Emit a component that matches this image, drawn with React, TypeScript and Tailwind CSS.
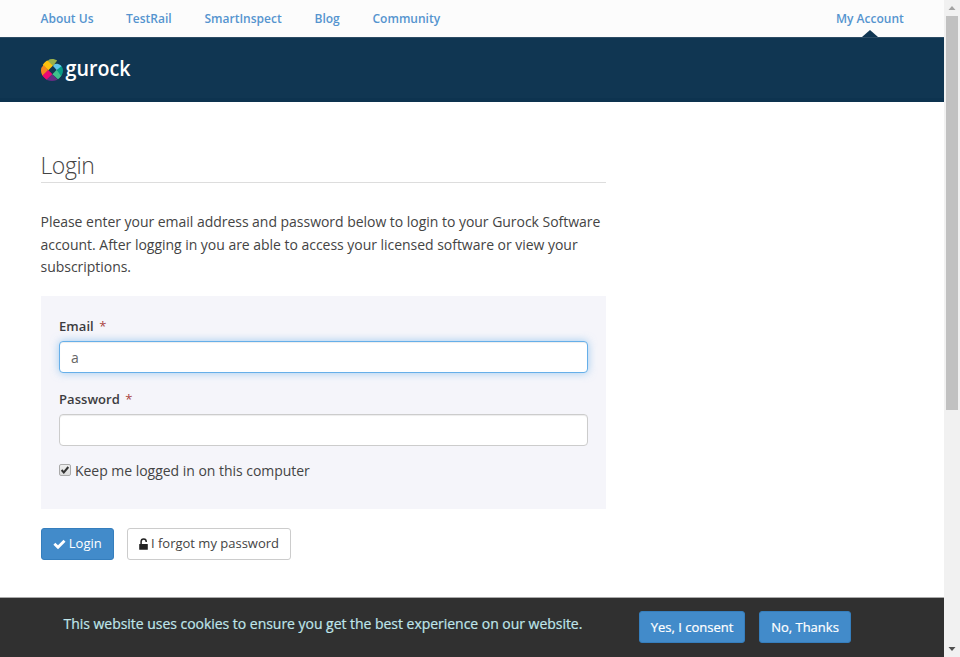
import React from "react";

const nav = [
  { label: "About Us", cls: "w-[53px] mr-[32.5px]" },
  { label: "TestRail", cls: "w-[45px] mr-[33.5px]" },
  { label: "SmartInspect", cls: "w-[78px] mr-[32px]" },
  { label: "Blog", cls: "w-[26px] mr-[32px]" },
  { label: "Community", cls: "w-[68px]" },
];

function Logo() {
  return (
    <svg width="100" height="44" viewBox="0 -12 100 44" aria-label="gurock">
      <defs>
        <clipPath id="mark">
          <path d="M11 0C13 0 15 .5 16.200 1.600L13.500 5l3-.2Q22 6.500 22 11.500C22 17 17 22 11 22S0 17 0 11.500 5.500 0 11 0Z" />
        </clipPath>
      </defs>
      <g clipPath="url(#mark)">
        <path d="M6 3 10-2h9v4l-7.200 5Z" fill="#9bb04b" />
        <path d="M2.500 7.200 0 3l4-4 7.800 7.800-4.500 4.400Z" fill="#fdc20f" />
        <path d="M-3 11 3 6.200l4.200 5L1.500 17Z" fill="#f6861f" />
        <path d="m1 17 6.200-6 4.300 4.300-5.500 6.200Z" fill="#ed0973" />
        <path d="m4 22 7.200-6.700L18 22l-7 4Z" fill="#662d82" />
        <path d="m11.400 15.200 4.300-4.400 5.300 5-3 5.500Z" fill="#3fc08b" />
        <path d="m15.700 10.800 4.200-5.500 5.500 5.700-5.400 6Z" fill="#079b86" />
        <path d="m12 7 4-4h6v3l-6.300 5.100Z" fill="#60c5ec" />
      </g>
      <text x="24.5" y="16.700" fill="white" fontSize="22" textLength="65" lengthAdjust="spacingAndGlyphs" className="font-['Open_Sans',sans-serif] font-semibold">gurock</text>
    </svg>
  );
}

function Field({ label, value, focused }: { label: string; value: string; focused?: boolean }) {
  return (
    <div className="h-[73px]">
      <label className="block h-[27px] text-[13px] leading-[24px] font-semibold tracking-[0.06px] text-[#3c3c40]">
        {label} <span className="ml-[2px] font-normal text-[#a94442]">*</span>
      </label>
      <input
        defaultValue={value}
        className={
          "block h-[32px] w-[529px] rounded-[4px] border bg-white px-[11px] text-[14px] text-[#666] outline-none " +
          (focused
            ? "border-[#66afe9] shadow-[inset_0_1px_1px_rgba(0,0,0,0.075),0_0_8px_rgba(102,175,233,0.6)]"
            : "border-[#ccc] shadow-[inset_0_1px_1px_rgba(0,0,0,0.075)]")
        }
      />
    </div>
  );
}

function CheckIcon() {
  return (
    <svg width="13" height="11" viewBox="0 0 13 11" className="mr-[3px] shrink-0" fill="currentColor">
      <path d="M.4 5.800 2.300 3.800 5 6.300 10.500.8l2 1.900L5 10.200Z" />
    </svg>
  );
}

function UnlockIcon() {
  return (
    <svg width="9" height="13" viewBox="0 0 9 13" className="mr-[3px] shrink-0 text-[#222]">
      <path d="M2.100 7V3.700C2.100 2 3.200 1 4.700 1s2.500 1 2.500 2.600v.4" fill="none" stroke="currentColor" strokeWidth="1.500" />
      <rect x=".2" y="6" width="8.600" height="5.800" rx=".5" fill="currentColor" />
    </svg>
  );
}

export default function App() {
  return (
    <div className="flex h-[657px] w-[960px] overflow-hidden bg-white font-['Open_Sans',sans-serif] text-[#444]">
      <div className="flex w-[944px] flex-col">
        <nav className="flex h-[37px] shrink-0 bg-[#fcfcfc] pl-[40.5px] text-[12px] leading-[38px] font-semibold whitespace-nowrap text-[#5594cf]">
          {nav.map((n) => (
            <a key={n.label} className={n.cls}>{n.label}</a>
          ))}
          <div className="relative mr-[40px] ml-auto w-[68px]">
            My Account
            <div className="absolute top-[30px] left-[25.5px] h-0 w-0 border-x-8 border-b-[7px] border-x-transparent border-b-[#103652]" />
          </div>
        </nav>
        <header className="h-[65px] shrink-0 border-t border-b-4 border-t-[#2c4c65] border-b-[#0d334f] bg-[#103652] pt-[9px] pl-[41px]">
          <Logo />
        </header>
        <main className="h-[495px] shrink-0 pt-[48px] pl-[40.5px]">
          <h1 className="h-[33px] w-[565.5px] border-b border-[#ddd] text-[23px] leading-[31px] font-light tracking-[-0.45px]">Login</h1>
          <div className="mt-[28.4px] text-[14px] leading-[22.4px] tracking-[-0.03px] whitespace-nowrap">
            <div>Please enter your email address and password below to login to your Gurock Software</div>
            <div>account. After logging in you are able to access your licensed software or view your</div>
            <div>subscriptions.</div>
          </div>
          <form className="mt-[17.4px] h-[213px] w-[565.5px] bg-[#f5f5fa] pt-[18px] pl-[18.5px]">
            <Field label="Email" value="a" focused />
            <Field label="Password" value="" />
            <label className="flex h-[22px] items-center text-[14px] tracking-[-0.03px] whitespace-nowrap">
              <span className="mr-[4px] mb-[2px] flex h-[12px] w-[12px] items-center justify-center rounded-[2px] border border-[#aaa] bg-gradient-to-b from-[#eee] to-[#ddd]">
                <svg width="10" height="10" viewBox="0 0 10 10"><path d="m1.600 5 2.200 2.400L8.300 2" fill="none" stroke="#333" strokeWidth="2" /></svg>
              </span>
              <span className="mb-[2px]">Keep me logged in on this computer</span>
            </label>
          </form>
          <div className="mt-[19px] flex text-[13px] whitespace-nowrap">
            <button className="mr-[13px] flex h-[32px] w-[73.5px] items-center justify-center rounded-[3px] border border-[#357ebd] bg-[#428bca] text-white"><CheckIcon />Login</button>
            <button className="flex h-[32px] w-[164px] items-center justify-center rounded-[3px] border border-[#ccc] bg-white"><UnlockIcon />I forgot my password</button>
          </div>
        </main>
        <footer className="flex h-[60px] shrink-0 border-t border-[#aaa] bg-[#303030] pt-[13px] pl-[63.5px] whitespace-nowrap">
          <p className="w-[575.5px] text-[14px] leading-[25px] tracking-[-0.03px] text-[#bfe5ea] [-webkit-text-stroke:0.2px_#bfe5ea]">This website uses cookies to ensure you get the best experience on our website.</p>
          <button className="mr-[14px] h-[32px] w-[106px] rounded-[3px] border border-[#357ebd] bg-[#428bca] pt-[2px] text-[13px] text-white [-webkit-text-stroke:0.2px_white]">Yes, I consent</button>
          <button className="h-[32px] w-[92px] rounded-[3px] border border-[#357ebd] bg-[#428bca] pt-[2px] text-[13px] text-white [-webkit-text-stroke:0.2px_white]">No, Thanks</button>
        </footer>
      </div>
      <aside className="flex w-[16px] flex-col items-center bg-[#f1f1f1]">
        <svg width="16" height="16" viewBox="0 0 16 16"><path d="m4.500 10 3.500-4 3.500 4Z" fill="#a3a3a3" /></svg>
        <div className="h-[394px] w-[12px] bg-[#c1c1c1]" />
        <svg className="mt-auto" width="16" height="16" viewBox="0 0 16 16"><path d="m4.500 6 3.500 4 3.500-4Z" fill="#505050" /></svg>
      </aside>
    </div>
  );
}
